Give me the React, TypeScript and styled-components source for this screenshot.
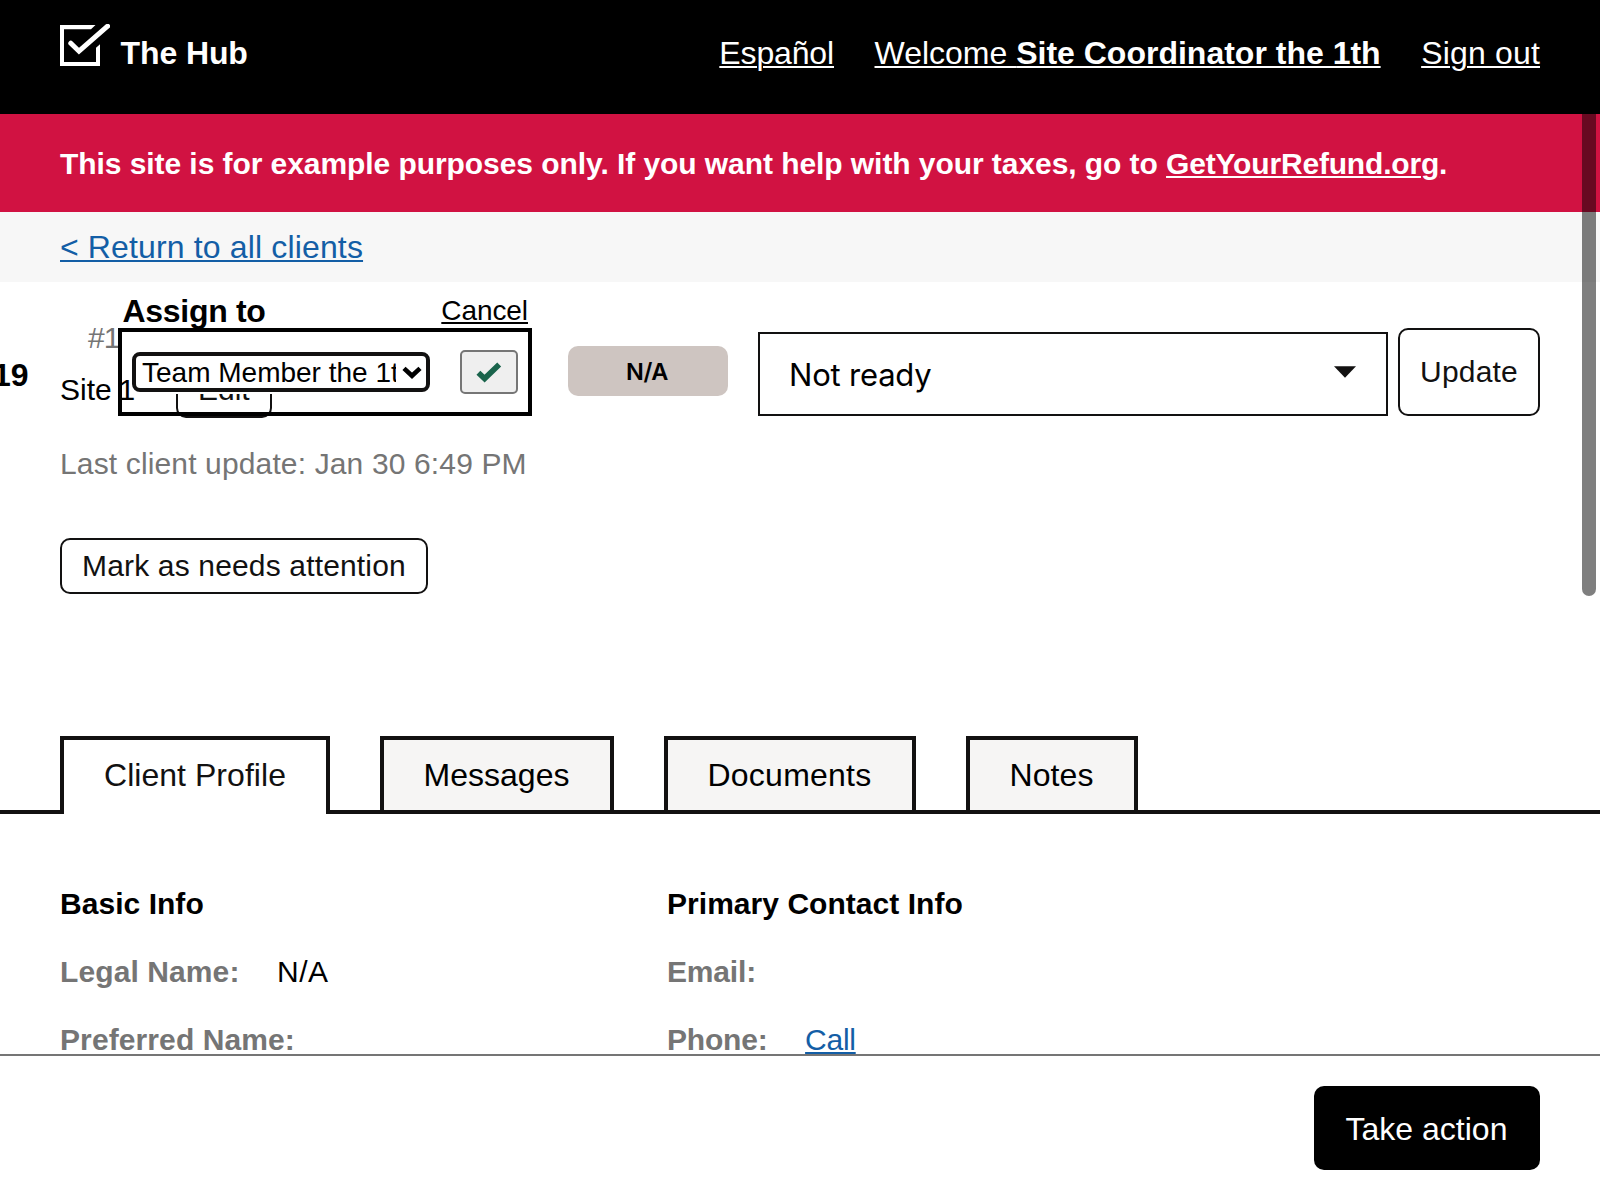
import React from "react";
import styled, { createGlobalStyle } from "styled-components";

const ink = "#121111";
const muted = "#757575";
const link = "#135ea6";

const GlobalStyle = createGlobalStyle`
  *, *::before, *::after { box-sizing: border-box; }
  html, body { margin: 0; padding: 0; background: #fff; }
  body {
    font-family: "Liberation Sans", Arial, sans-serif;
    font-size: 30px;
    line-height: 37px;
    color: #000;
    overflow: hidden;
  }
  button { font-family: inherit; margin: 0; cursor: pointer; }
`;

const Page = styled.div`
  position: relative;
  display: flex;
  flex-direction: column;
  width: 1600px;
  height: 1200px;
  overflow: hidden;
  background: #fff;
`;

const TopBar = styled.header`
  flex: none;
  display: flex;
  align-items: center;
  justify-content: space-between;
  height: 114px;
  padding: 0 60px 8px;
  background: #000;
  color: #fff;
  font-size: 32px;
  line-height: 40px;
`;

const Brand = styled.div`
  display: flex;
  align-items: center;
  gap: 10.5px;
  font-weight: 700;
  letter-spacing: -0.1px;

  svg { display: block; margin-bottom: 16px; }
`;

const Nav = styled.nav`
  display: flex;
  gap: 40.5px;
`;

const TextLink = styled.a<{ $color?: string; $spacing?: number }>`
  color: ${(p) => p.$color ?? "inherit"};
  letter-spacing: ${(p) => p.$spacing ?? 0}px;
  text-decoration: underline;
  text-decoration-thickness: 2px;
  text-underline-offset: 2px;
  white-space: pre;
`;

const Scroller = styled.main`
  flex: 1;
  min-height: 0;
  overflow: hidden;
`;

const DemoBanner = styled.div`
  height: 98px;
  padding: 31px 60px 0;
  background: #d11242;
  color: #fff;
  font-weight: 700;
  letter-spacing: -0.066px;
  white-space: nowrap;
`;

const Breadcrumb = styled.div`
  height: 70px;
  padding: 17px 60px;
  background: #f7f7f7;
  font-size: 32px;
  line-height: 36px;
`;

const ClientHeader = styled.section`
  position: relative;
  display: flex;
  height: 454px;
  padding: 0 60px;
`;

const ClientName = styled.h1`
  position: absolute;
  top: 75px;
  right: calc(100% - 28.5px);
  margin: 0;
  font-size: 32px;
  line-height: 36px;
  font-weight: 700;
`;

const ClientInfo = styled.div`
  flex: none;
  width: 508px;
  padding-top: 37px;
`;

const ClientId = styled.div`
  padding-left: 28px;
  color: ${muted};
  letter-spacing: -0.9px;
`;

const SiteRow = styled.div`
  display: flex;
  align-items: flex-start;
  margin-top: 6px;
`;

const SiteName = styled.span`
  width: 116px;
  padding-top: 9px;
  word-spacing: -1.6px;
`;

const LastUpdate = styled.div`
  margin-top: 27px;
  color: ${muted};
  letter-spacing: 0.14px;
`;

const OutlineButton = styled.button<{ $tall?: boolean; $spacing?: number }>`
  flex: none;
  height: ${(p) => (p.$tall ? 88 : 56)}px;
  padding: ${(p) => (p.$tall ? "23px 20px 24px" : "7px 20px 8px")};
  border: 2px solid ${ink};
  border-radius: 10px;
  background: #fff;
  color: ${ink};
  font-size: 30px;
  line-height: 37px;
  letter-spacing: ${(p) => p.$spacing ?? 0}px;
`;

const AttentionRow = styled.div`
  display: flex;
  margin-top: 56px;
`;

const StatusControls = styled.div`
  flex: 1;
  display: flex;
  align-items: flex-end;
  height: 134px;
`;

const UrgencyPill = styled.span`
  width: 160px;
  height: 50px;
  margin: 0 30px 20px 0;
  padding-right: 2px;
  border-radius: 10px;
  background: #cec5c1;
  font-family: Inter, "Liberation Sans", sans-serif;
  font-size: 23.5px;
  font-weight: 600;
  line-height: 51px;
  letter-spacing: -0.4px;
  text-align: center;
`;

const StatusSelect = styled.div`
  flex: 1;
  display: flex;
  align-items: center;
  justify-content: space-between;
  height: 84px;
  margin-right: 10px;
  padding: 1px 30px 0 29px;
  border: 2px solid ${ink};
  background: #fff;
  font-family: Inter, "Liberation Sans", sans-serif;
  font-size: 31px;
  letter-spacing: -0.2px;

  svg { display: block; margin-bottom: 5px; }
`;

const AssignPopover = styled.div`
  position: absolute;
  top: 11px;
  left: 118px;
  width: 414px;
`;

const AssignHeading = styled.div`
  display: flex;
  justify-content: space-between;
  height: 35px;
  padding: 0 4px;
  font-size: 28px;
  line-height: 31px;

  a { margin-top: 2px; }
`;

const AssignLabel = styled.label`
  padding-left: 0.5px;
  font-size: 32px;
  line-height: 36px;
  font-weight: 700;
  letter-spacing: -0.3px;
`;

const AssignBox = styled.div`
  display: flex;
  align-items: flex-start;
  gap: 30px;
  height: 88px;
  padding: 20px 0 0 10px;
  border: 4px solid #000;
`;

const MemberSelect = styled.div`
  display: flex;
  justify-content: space-between;
  width: 298px;
  height: 40px;
  padding: 0 4px 0 6px;
  border: 4px solid ${ink};
  border-radius: 8px;
  background: #fff;
  box-shadow: 0 2px 0 #fff;

  span {
    width: 254px;
    overflow: hidden;
    font-size: 28px;
    line-height: 33px;
    white-space: nowrap;
  }
  svg { flex: none; display: block; margin: 10px 0 0; }
`;

const ConfirmButton = styled.button`
  display: flex;
  align-items: center;
  justify-content: center;
  width: 58px;
  height: 44px;
  margin-top: -2px;
  padding: 0;
  border: 2px solid #767676;
  border-radius: 5px;
  background: #efefef;
`;

const TabBar = styled.div`
  display: flex;
  gap: 50px;
  height: 78px;
  padding: 0 60px;
  border-bottom: 4px solid ${ink};
`;

const Tab = styled.a<{ $active?: boolean; $spacing?: number }>`
  height: ${(p) => (p.$active ? 78 : 74)}px;
  padding: 17px ${(p) => (p.$active ? "40px 0 40px" : "40.5px 0 39.5px")};
  border: 4px solid ${ink};
  border-bottom: 0;
  background: ${(p) => (p.$active ? "#fff" : "#f6f5f4")};
  color: ${(p) => (p.$active ? ink : "#000")};
  font-size: 32px;
  line-height: 36px;
  letter-spacing: ${(p) => p.$spacing ?? 0}px;
`;

const Profile = styled.section`
  display: grid;
  grid-template-columns: 607px 1fr;
  padding: 71px 60px 0;
`;

const FieldList = styled.div<{ $spacing: number }>`
  display: flex;
  flex-direction: column;
  gap: 31px;
  letter-spacing: ${(p) => p.$spacing}px;
`;

const FieldHeading = styled.h2`
  margin: 0;
  font-size: 30px;
  font-weight: 700;
  letter-spacing: 0.04px;
`;

const Field = styled.div`
  display: flex;
  gap: 37.5px;
`;

const FieldLabel = styled.span`
  color: ${muted};
  font-weight: 700;
`;

const FieldValue = styled.span`
  letter-spacing: 0.5px;
`;

const ActionFooter = styled.footer`
  flex: none;
  display: flex;
  justify-content: flex-end;
  align-items: flex-start;
  height: 146px;
  padding: 30px 60px 0;
  border-top: 2px solid ${muted};
  background: #fff;
`;

const PrimaryButton = styled.button`
  width: 226px;
  height: 84px;
  padding: 25px 1px 23px 0;
  border: 0;
  border-radius: 10px;
  background: #000;
  color: #fff;
  font-size: 32px;
  line-height: 36px;
`;

const ScrollThumb = styled.div`
  position: absolute;
  top: 114px;
  right: 4px;
  width: 14px;
  height: 482px;
  border-radius: 0 0 7px 7px;
  background: rgba(0, 0, 0, 0.5);
`;

const LogoIcon = () => (
  <svg width="50" height="42" viewBox="0 0 50 42" fill="none">
    <path d="M0 1H35.5L31 5.2H4V38H36V23.7L40 20.2V42H0Z" fill="#fff" />
    <path d="M10.8 19.2L19 27.2L47.6 2.2" stroke="#fff" strokeWidth="5" strokeLinecap="round" />
  </svg>
);

const CaretIcon = () => (
  <svg width="22" height="12" viewBox="0 0 22 12">
    <path d="M0 0.3H22L11 11.7Z" fill={ink} />
  </svg>
);

const ChevronIcon = () => (
  <svg width="20" height="14" viewBox="0 0 20 14" fill="none">
    <path d="M2 2.4L10 9.8L18 2.4" stroke="#000" strokeWidth="4.6" />
  </svg>
);

const CheckIcon = () => (
  <svg width="28" height="22" viewBox="0 0 28 22" fill="none">
    <path d="M3.4 11.8L9.6 17.6L24.2 3.4" stroke="#1a644c" strokeWidth="5.6" strokeLinecap="butt" />
  </svg>
);

const tabs = [
  { label: "Client Profile", active: true, spacing: 0.04 },
  { label: "Messages", spacing: 0.02 },
  { label: "Documents", spacing: 0.24 },
  { label: "Notes", spacing: 0.08 },
];

export default function App() {
  return (
    <Page>
      <GlobalStyle />
      <TopBar>
        <Brand>
          <LogoIcon />
          The Hub
        </Brand>
        <Nav>
          <TextLink $spacing={-0.14}>Español</TextLink>
          <TextLink>
            Welcome <strong>Site Coordinator the 1th</strong>
          </TextLink>
          <TextLink $spacing={0.18}>Sign out</TextLink>
        </Nav>
      </TopBar>

      <Scroller>
        <DemoBanner>
          This site is for example purposes only. If you want help with your taxes, go to{" "}
          <TextLink $spacing={-0.18}>GetYourRefund.org</TextLink>.
        </DemoBanner>
        <Breadcrumb>
          <TextLink $color={link} $spacing={0.145}>&lt; Return to all clients</TextLink>
        </Breadcrumb>

        <ClientHeader>
          <ClientName>19</ClientName>
          <ClientInfo>
            <ClientId>#1</ClientId>
            <SiteRow>
              <SiteName>Site 1</SiteName>
              <OutlineButton>Edit</OutlineButton>
            </SiteRow>
            <LastUpdate>Last client update: Jan 30 6:49 PM</LastUpdate>
            <AttentionRow>
              <OutlineButton $spacing={0.16}>Mark as needs attention</OutlineButton>
            </AttentionRow>
          </ClientInfo>
          <StatusControls>
            <UrgencyPill>N/A</UrgencyPill>
            <StatusSelect>
              Not ready
              <CaretIcon />
            </StatusSelect>
            <OutlineButton $tall $spacing={0.2}>Update</OutlineButton>
          </StatusControls>

          <AssignPopover>
            <AssignHeading>
              <AssignLabel>Assign to</AssignLabel>
              <TextLink $spacing={-0.08}>Cancel</TextLink>
            </AssignHeading>
            <AssignBox>
              <MemberSelect>
                <span>Team Member the 1th</span>
                <ChevronIcon />
              </MemberSelect>
              <ConfirmButton aria-label="Save">
                <CheckIcon />
              </ConfirmButton>
            </AssignBox>
          </AssignPopover>
        </ClientHeader>

        <TabBar>
          {tabs.map((tab) => (
            <Tab key={tab.label} $active={tab.active} $spacing={tab.spacing}>
              {tab.label}
            </Tab>
          ))}
        </TabBar>

        <Profile>
          <FieldList $spacing={0.1}>
            <FieldHeading>Basic Info</FieldHeading>
            <Field>
              <FieldLabel>Legal Name:</FieldLabel>
              <FieldValue>N/A</FieldValue>
            </Field>
            <Field>
              <FieldLabel>Preferred Name:</FieldLabel>
            </Field>
          </FieldList>
          <FieldList $spacing={-0.18}>
            <FieldHeading>Primary Contact Info</FieldHeading>
            <Field>
              <FieldLabel>Email:</FieldLabel>
            </Field>
            <Field>
              <FieldLabel>Phone:</FieldLabel>
              <TextLink $color={link} $spacing={-0.27}>Call</TextLink>
            </Field>
          </FieldList>
        </Profile>
      </Scroller>

      <ActionFooter>
        <PrimaryButton>Take action</PrimaryButton>
      </ActionFooter>
      <ScrollThumb />
    </Page>
  );
}
